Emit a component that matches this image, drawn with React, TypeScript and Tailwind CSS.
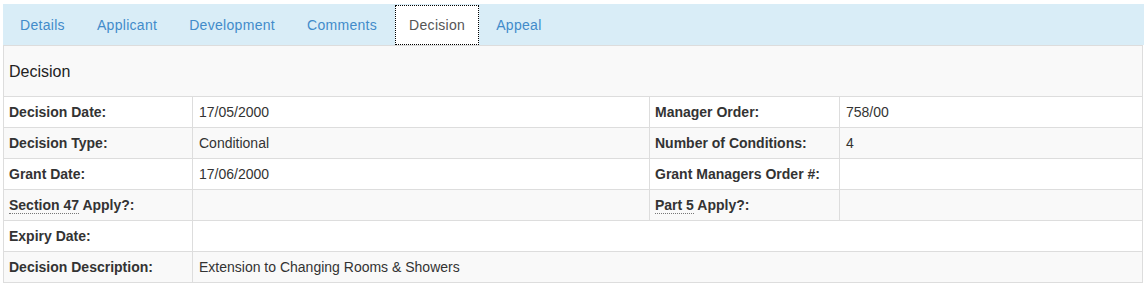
import React from "react";

const tabs = ["Details", "Applicant", "Development", "Comments", "Decision", "Appeal"];

function Label({ children }: { children: React.ReactNode }) {
  return <td className="border border-[#ddd] pl-[5px] pr-[6px] py-[5px] font-bold align-top">{children}</td>;
}

function Value({ children, colSpan }: { children?: React.ReactNode; colSpan?: number }) {
  return (
    <td colSpan={colSpan} className="border border-[#ddd] px-[6px] py-[5px] align-top">
      {children}
    </td>
  );
}

function Abbr({ children, title }: { children: React.ReactNode; title: string }) {
  return (
    <abbr title={title} className="no-underline border-b border-dotted border-[#777] cursor-help">
      {children}
    </abbr>
  );
}

export default function App() {
  return (
    <div className="bg-white min-h-[292px] pt-[4px] px-[3px] font-['Liberation_Sans',Arial,sans-serif] text-[14px] leading-[20px] text-[#333]">
      {/* tabs */}
      <div className="bg-[#d9edf7] pt-[1px] pl-[2px] flex tracking-[0.3px]">
        {tabs.map((t) =>
          t === "Decision" ? (
            <div
              key={t}
              className="bg-white text-[#555] px-[14px] py-[10px] mr-[2px] ml-[1px] outline-1 outline-dotted outline-black -outline-offset-1"
            >
              {t}
            </div>
          ) : (
            <div key={t} className="text-[#428bca] px-[15px] py-[10px] mr-[2px]">
              {t}
            </div>
          )
        )}
      </div>

      {/* panel */}
      <div className="border border-[#ddd] mr-[1px]">
        <div className="bg-[#f9f9f9] px-[5px] pt-[2px] h-[50px] flex items-center text-[16px] text-[#222]">Decision</div>
        <table className="border-collapse table-fixed -mb-[1px] -ml-[1px] w-[calc(100%+2px)] -mr-[1px]">
          <colgroup>
            <col className="w-[189px]" />
            <col className="w-[457px]" />
            <col className="w-[190px]" />
            <col />
          </colgroup>
          <tbody>
            <tr className="bg-white">
              <Label>Decision Date:</Label>
              <Value>17/05/2000</Value>
              <Label>Manager Order:</Label>
              <Value>758/00</Value>
            </tr>
            <tr className="bg-[#f9f9f9]">
              <Label>Decision Type:</Label>
              <Value>Conditional</Value>
              <Label>Number of Conditions:</Label>
              <Value>4</Value>
            </tr>
            <tr className="bg-white">
              <Label>Grant Date:</Label>
              <Value>17/06/2000</Value>
              <Label>Grant Managers Order #:</Label>
              <Value />
            </tr>
            <tr className="bg-[#f9f9f9]">
              <Label>
                <Abbr title="Section 47">Section 47</Abbr> Apply?:
              </Label>
              <Value />
              <Label>
                <Abbr title="Part 5">Part 5</Abbr> Apply?:
              </Label>
              <Value />
            </tr>
            <tr className="bg-white">
              <Label>Expiry Date:</Label>
              <Value colSpan={3} />
            </tr>
            <tr className="bg-[#f9f9f9]">
              <Label>Decision Description:</Label>
              <Value colSpan={3}>Extension to Changing Rooms &amp; Showers</Value>
            </tr>
          </tbody>
        </table>
      </div>
    </div>
  );
}
